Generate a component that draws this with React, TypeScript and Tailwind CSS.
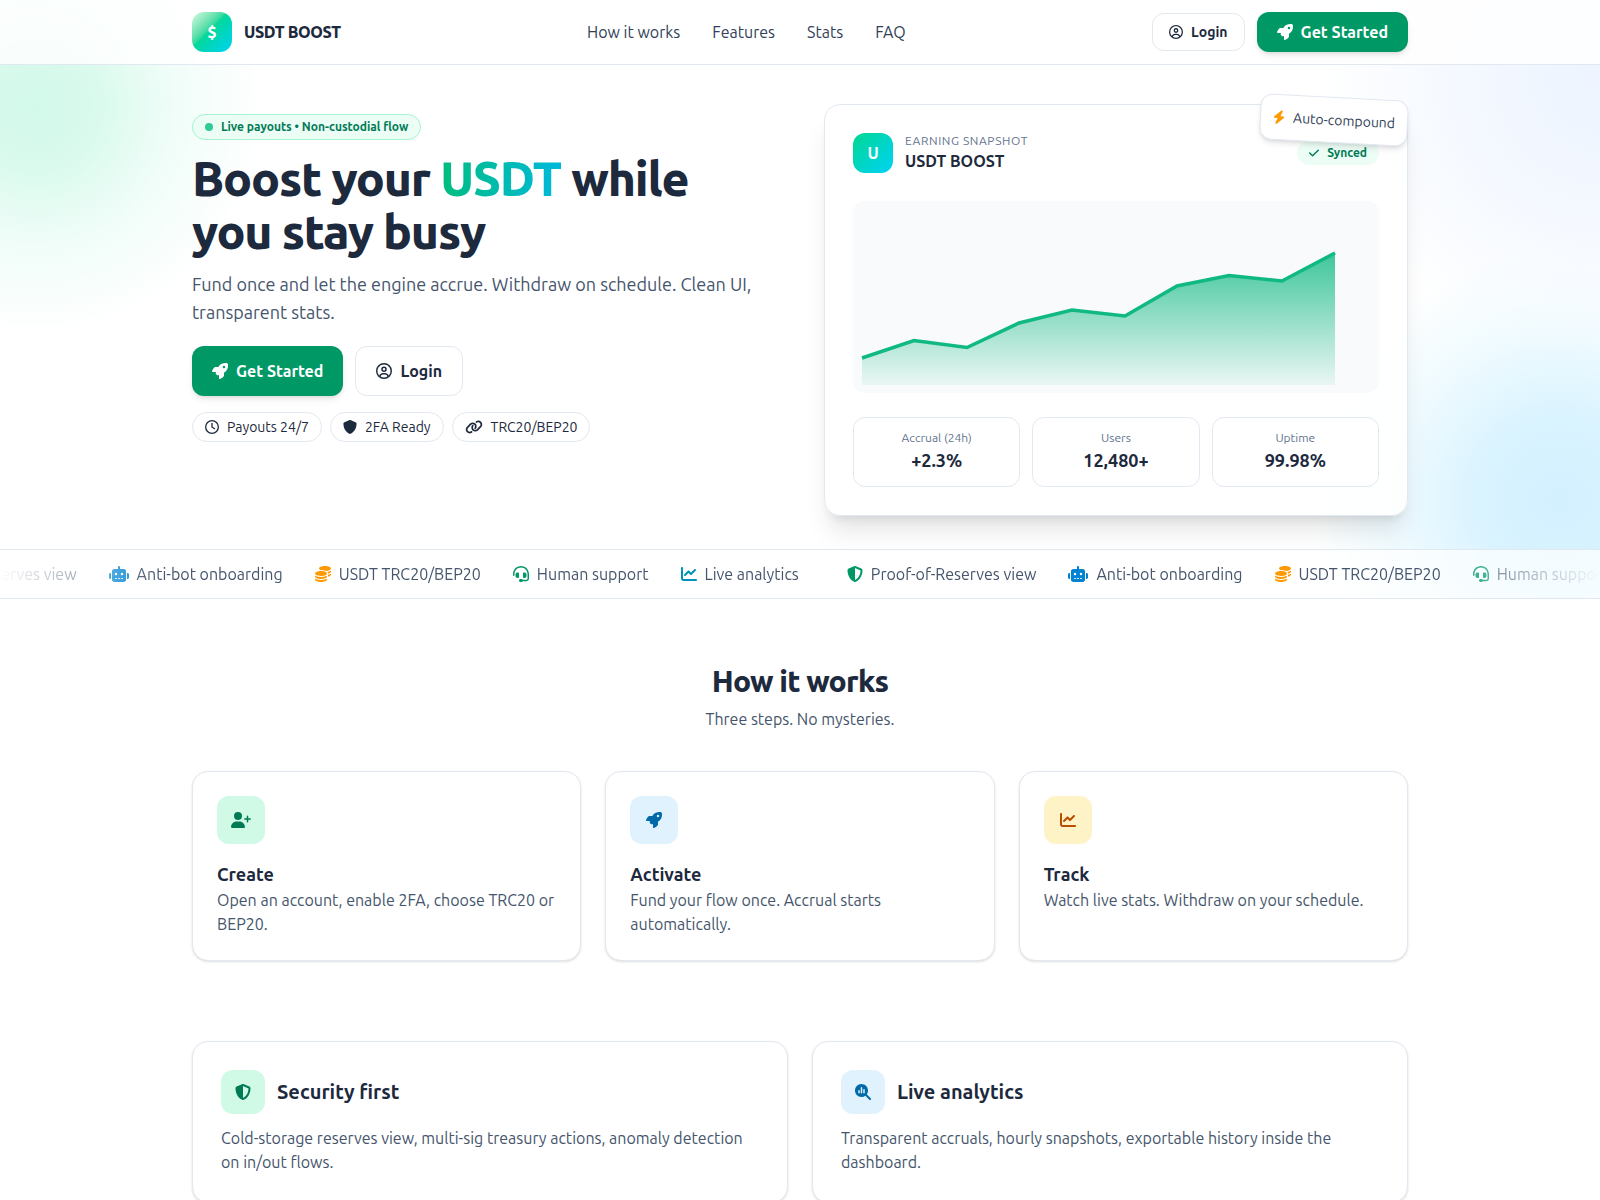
import React from "react";
import {
  FaBolt,
  FaChartLine,
  FaCheck,
  FaCoins,
  FaHeadset,
  FaLink,
  FaMagnifyingGlassChart,
  FaRegCircleUser,
  FaRegClock,
  FaRobot,
  FaRocket,
  FaShield,
  FaShieldHalved,
  FaUserPlus,
} from "react-icons/fa6";

const navLinks = [
  { name: "How it works", href: "#how" },
  { name: "Features", href: "#features" },
  { name: "Stats", href: "#stats" },
  { name: "FAQ", href: "#faq" },
];

const chips = [
  { label: "Payouts 24/7", icon: <FaRegClock className="h-3.5 w-3.5" /> },
  { label: "2FA Ready", icon: <FaShield className="h-3.5 w-3.5" /> },
  { label: "TRC20/BEP20", icon: <FaLink className="h-3.5 w-[18px]" /> },
];

const stats = [
  { label: "Accrual (24h)", value: "+2.3%" },
  { label: "Users", value: "12,480+" },
  { label: "Uptime", value: "99.98%" },
];

const ticker = [
  { label: "Proof-of-Reserves view", icon: <FaShieldHalved className="h-4 w-4 text-emerald-600" /> },
  { label: "Anti-bot onboarding", icon: <FaRobot className="h-4 w-5 text-sky-600" /> },
  { label: "USDT TRC20/BEP20", icon: <FaCoins className="h-4 w-4 text-amber-500" /> },
  { label: "Human support", icon: <FaHeadset className="h-4 w-4 text-emerald-600" /> },
  { label: "Live analytics", icon: <FaChartLine className="h-4 w-4 text-cyan-600" /> },
];

const steps = [
  {
    title: "Create",
    text: "Open an account, enable 2FA, choose TRC20 or BEP20.",
    icon: <FaUserPlus className="h-4 w-5" />,
    tone: "bg-emerald-100 text-emerald-700",
  },
  {
    title: "Activate",
    text: "Fund your flow once. Accrual starts automatically.",
    icon: <FaRocket className="h-4 w-4" />,
    tone: "bg-sky-100 text-sky-700",
  },
  {
    title: "Track",
    text: "Watch live stats. Withdraw on your schedule.",
    icon: <FaChartLine className="h-4 w-4" />,
    tone: "bg-amber-100 text-amber-700",
  },
];

const features = [
  {
    title: "Security first",
    text: "Cold-storage reserves view, multi-sig treasury actions, anomaly detection on in/out flows.",
    icon: <FaShieldHalved className="h-4 w-4" />,
    tone: "bg-emerald-100 text-emerald-700",
  },
  {
    title: "Live analytics",
    text: "Transparent accruals, hourly snapshots, exportable history inside the dashboard.",
    icon: <FaMagnifyingGlassChart className="h-4 w-4" />,
    tone: "bg-sky-100 text-sky-700",
  },
];

function Header() {
  return (
    <header className="relative z-20 border-b border-slate-200 bg-white/85">
      <div className="max-w-7xl mx-auto px-8 py-3 flex items-center justify-between">
        <a href="#" className="flex items-center gap-3">
          <span className="w-10 h-10 rounded-xl bg-linear-135 from-emerald-100 via-[#08d79a] via-45% to-[#00d2f5] flex items-center justify-center text-white font-extrabold">
            $
          </span>
          <span className="font-extrabold tracking-tight">USDT BOOST</span>
        </a>
        <nav className="hidden md:flex items-center gap-8 text-slate-700">
          {navLinks.map((link) => (
            <a key={link.name} href={link.href} className="hover:text-emerald-600">
              {link.name}
            </a>
          ))}
        </nav>
        <div className="flex items-center gap-3">
          <button className="h-[38px] px-4 rounded-xl border border-slate-200 bg-white text-sm font-semibold flex items-center gap-2">
            <FaRegCircleUser className="h-3.5 w-3.5" />
            Login
          </button>
          <button className="h-10 px-5 rounded-xl bg-emerald-600 text-white font-semibold shadow-md flex items-center gap-2">
            <FaRocket className="h-4 w-4" />
            Get Started
          </button>
        </div>
      </div>
    </header>
  );
}

function EarningChart() {
  return (
    <svg viewBox="0 0 526 192" preserveAspectRatio="none" className="w-full h-full">
      <defs>
        <linearGradient id="area" x1="0" y1="0" x2="0" y2="1">
          <stop offset="0" stopColor="#10b981" stopOpacity="0.8" />
          <stop offset="1" stopColor="#10b981" stopOpacity="0.06" />
        </linearGradient>
      </defs>
      <path
        d="M9 157 61 139.500 114 146.500 166 122 219 109 272 115 324 85 376 74.500 429 80 482 52V184H9Z"
        fill="url(#area)"
      />
      <path
        d="M9 157 61 139.500 114 146.500 166 122 219 109 272 115 324 85 376 74.500 429 80 482 52"
        fill="none"
        stroke="#10b981"
        strokeWidth="3.500"
      />
    </svg>
  );
}

function SnapshotCard() {
  return (
    <div className="relative rounded-2xl border border-slate-200 bg-white/90 p-7 shadow-xl">
      <div className="flex items-center justify-between">
        <div className="flex items-center gap-3">
          <span className="w-10 h-10 rounded-xl bg-linear-135 from-[#00d68f] to-[#00d2f5] flex items-center justify-center text-white font-bold">
            U
          </span>
          <div>
            <p className="text-xs uppercase tracking-wider text-slate-500">Earning snapshot</p>
            <p className="font-semibold">USDT BOOST</p>
          </div>
        </div>
        <span className="rounded-full bg-emerald-50 px-3 py-1 text-xs font-semibold text-emerald-700 flex items-center gap-2">
          <FaCheck className="h-3 w-2.5" />
          Synced
        </span>
      </div>

      <div className="mt-7 h-48 rounded-xl bg-slate-50">
        <EarningChart />
      </div>

      <div className="mt-6 grid grid-cols-3 gap-3">
        {stats.map((stat) => (
          <div key={stat.label} className="rounded-xl border border-slate-200 bg-white/70 p-3 text-center">
            <p className="text-xs text-slate-500 leading-4">{stat.label}</p>
            <p className="text-lg font-bold leading-7">{stat.value}</p>
          </div>
        ))}
      </div>

      <div className="absolute -top-2 -right-px rotate-3 rounded-xl border border-slate-200 bg-white px-3 py-3 shadow-md text-sm text-slate-700 flex items-center gap-2">
        <FaBolt className="h-3.5 w-3 text-amber-500" />
        Auto-compound
      </div>
    </div>
  );
}

function Hero() {
  return (
    <section className="max-w-7xl mx-auto px-8 pt-[39px] pb-[33px] grid lg:grid-cols-2 gap-12">
      <div className="pt-[9px]">
        <span className="inline-flex items-center gap-2 rounded-full border border-emerald-200 bg-emerald-50 px-3 py-1 text-xs font-semibold text-emerald-700">
          <span className="w-2 h-2 rounded-full bg-emerald-500/80"></span>
          Live payouts • Non-custodial flow
        </span>
        <h1 className="mt-3 text-5xl leading-[53px] font-extrabold tracking-tight">
          Boost your{" "}
          <span className="bg-linear-to-r from-[#00bc7d] to-[#00b8db] bg-clip-text text-transparent">USDT</span> while
          <br />
          you stay busy
        </h1>
        <p className="mt-3 text-lg leading-7 text-slate-600">
          Fund once and let the engine accrue. Withdraw on schedule. Clean UI, transparent stats.
        </p>
        <div className="mt-5 flex items-center gap-3">
          <button className="h-[50px] px-5 rounded-xl bg-emerald-600 text-white font-semibold shadow-md flex items-center gap-2">
            <FaRocket className="h-4 w-4" />
            Get Started
          </button>
          <button className="h-[50px] px-5 rounded-xl border border-slate-200 bg-white font-semibold flex items-center gap-2">
            <FaRegCircleUser className="h-4 w-4" />
            Login
          </button>
        </div>
        <div className="mt-4 flex flex-wrap gap-2">
          {chips.map((chip) => (
            <span key={chip.label} className="flex items-center gap-2 rounded-full border border-slate-200 bg-white px-3 py-1 text-sm">
              {chip.icon}
              {chip.label}
            </span>
          ))}
        </div>
      </div>
      <SnapshotCard />
    </section>
  );
}

function Ticker() {
  return (
    <div className="border-y border-slate-200 bg-white/70">
      <div className="overflow-hidden py-3 mask-x-from-90%">
        <div className="flex w-max -translate-x-[113px] text-slate-600">
          {[0, 1].map((group) => (
            <div key={group} className="flex items-center gap-8 pr-12">
              {ticker.map((item) => (
                <span key={item.label} className="flex items-center gap-2 whitespace-nowrap">
                  {item.icon}
                  {item.label}
                </span>
              ))}
            </div>
          ))}
        </div>
      </div>
    </div>
  );
}

export default function App() {
  return (
    <div className="min-h-screen bg-white font-['Ubuntu','Noto_Sans',sans-serif] text-slate-800">
      <div className="relative overflow-hidden">
        {/* soft colour spots behind the header, hero and ticker */}
        <div className="absolute inset-0 bg-[radial-gradient(circle_at_35px_105px,#d2f9e9_0,#d9faed_60px,#f0fdf8_140px,transparent_230px),radial-gradient(circle_at_100%_80px,#edf4ff_0,#f5f9ff_150px,transparent_280px),radial-gradient(circle_at_1560px_500px,#d3f0ff_0,#d9f3ff_80px,#f0fbff_170px,transparent_250px)]"></div>
        <div className="relative">
          <Header />
          <Hero />
          <Ticker />
        </div>
      </div>

      <section id="how" className="max-w-7xl mx-auto px-8 py-16">
        <div className="text-center">
          <h2 className="text-3xl leading-9 font-extrabold tracking-tight">How it works</h2>
          <p className="mt-2 text-slate-600">Three steps. No mysteries.</p>
        </div>
        <div className="mt-10 grid md:grid-cols-3 gap-6">
          {steps.map((step) => (
            <div key={step.title} className="rounded-2xl border border-slate-200 bg-white p-6 shadow-sm">
              <div className={`w-12 h-12 rounded-xl flex items-center justify-center ${step.tone}`}>{step.icon}</div>
              <h3 className="mt-4 text-lg leading-7 font-semibold">{step.title}</h3>
              <p className="text-slate-600">{step.text}</p>
            </div>
          ))}
        </div>
      </section>

      <section id="features" className="max-w-7xl mx-auto px-8 pt-4 pb-16">
        <div className="grid md:grid-cols-2 gap-6">
          {features.map((feature) => (
            <div key={feature.title} className="rounded-2xl border border-slate-200 bg-white p-7 shadow-sm">
              <div className="flex items-center gap-3">
                <div className={`w-11 h-11 rounded-xl flex items-center justify-center ${feature.tone}`}>{feature.icon}</div>
                <h3 className="text-xl font-semibold">{feature.title}</h3>
              </div>
              <p className="mt-3 text-slate-600">{feature.text}</p>
            </div>
          ))}
        </div>
      </section>
    </div>
  );
}
